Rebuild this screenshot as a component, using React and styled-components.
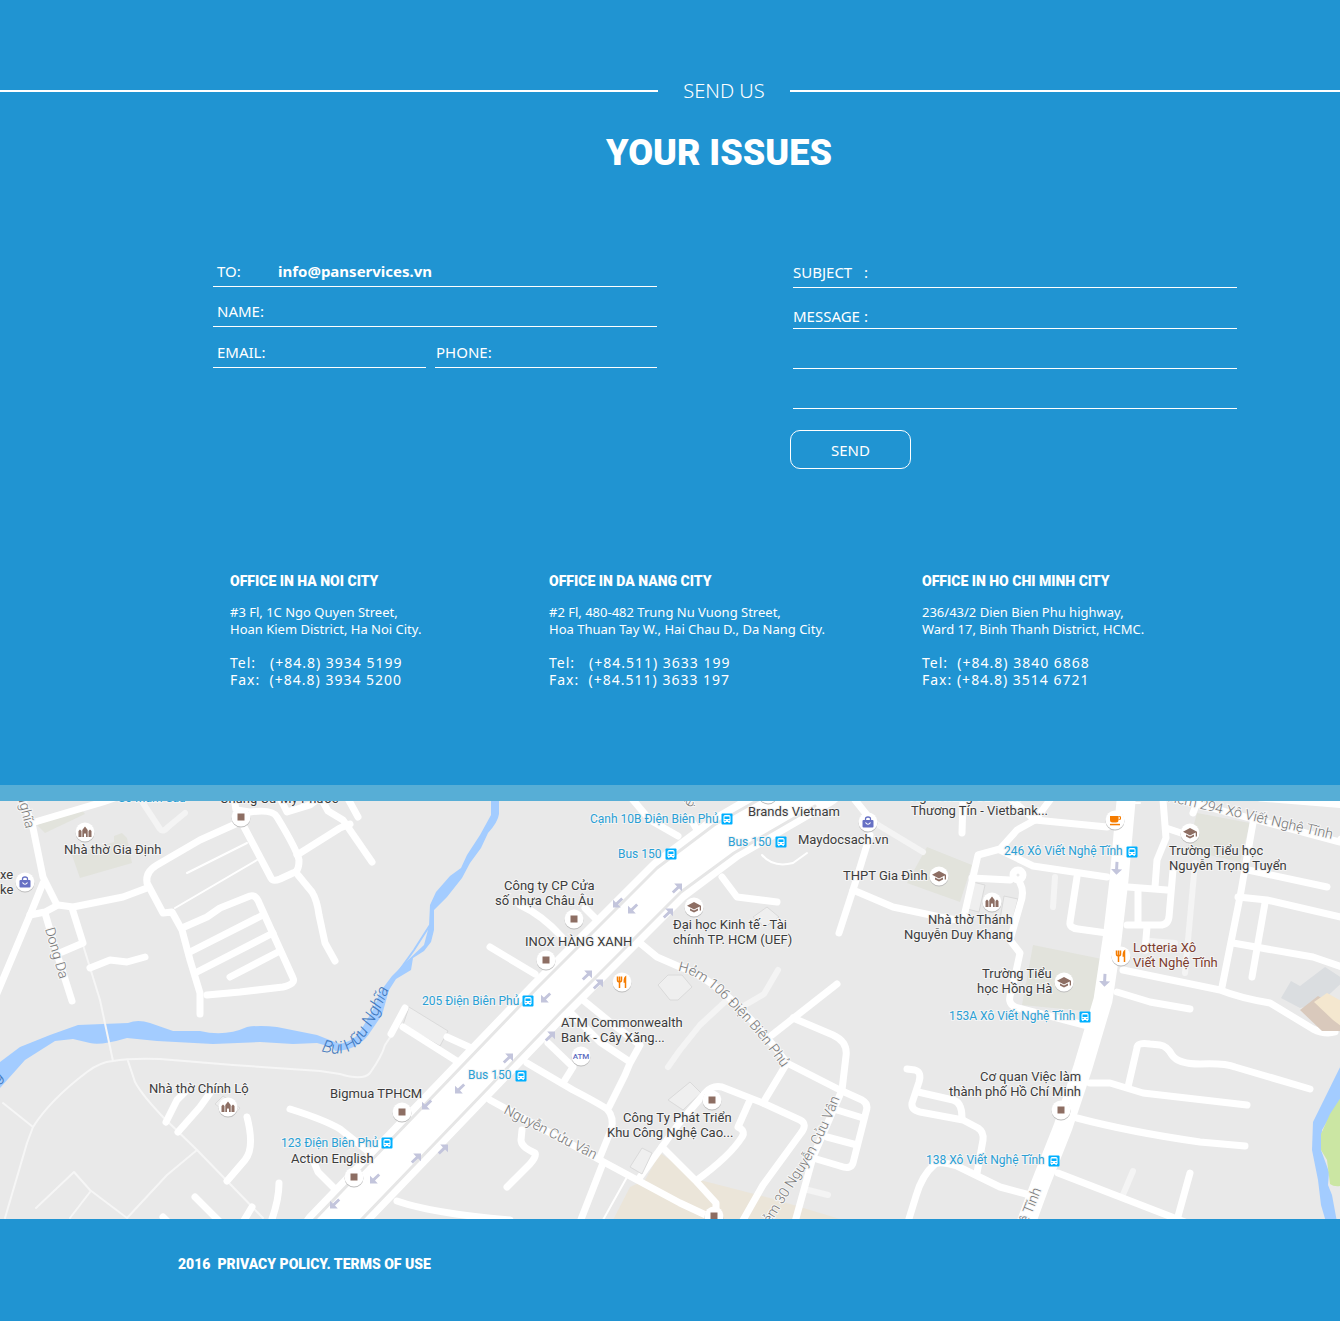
import React from 'react';
import styled, { createGlobalStyle } from 'styled-components';

const GlobalStyle = createGlobalStyle`
  *, *::before, *::after { box-sizing: border-box; }
  body { margin: 0; background: #2094d2; color: #fff; font-family: 'Noto Sans', 'Open Sans', sans-serif; }
`;

const Contact = styled.main`
  padding: 77px 0 97px;
`;

const Kicker = styled.p`
  display: grid;
  grid-template-columns: 658fr 132px 550fr;
  align-items: center;
  margin: 0;
  font-size: 20px;
  font-weight: 300;
  line-height: 28px;
  text-align: center;

  &::before, &::after { content: ''; height: 2px; background: #fff; }
`;

const Title = styled.h1`
  margin: 24px 0 0;
  padding-left: 98px;
  font: 900 36px/48px Roboto, sans-serif;
  text-align: center;
`;

const Form = styled.form`
  display: grid;
  grid-template-columns: minmax(0, 444fr) minmax(0, 447fr);
  gap: 133px;
  padding: 0 103px 0 213px;
  margin-top: 70px;
  font-size: 15px;
  line-height: 20px;
`;

const Fields = styled.div`
  display: grid;
  align-content: start;
  grid-template-rows: ${(p) => p.$rows};
  row-gap: ${(p) => p.$gap || 0}px;
  padding-left: ${(p) => p.$inset || 0}px;
`;

const Field = styled.div`
  display: flex;
  align-items: flex-end;
  padding: 0 0 5px ${(p) => p.$inset || 0}px;
  border-bottom: 1px solid #fff;
`;

const Label = styled.label`
  display: flex;
  flex: none;
  justify-content: space-between;
  width: ${(p) => (p.$width ? `${p.$width}px` : 'auto')};
`;

const Input = styled.input`
  flex: 1;
  min-width: 0;
  height: 20px;
  padding: 0;
  border: 0;
  outline: 0;
  background: none;
  color: #fff;
  font: inherit;
  font-weight: ${(p) => (p.readOnly ? 700 : 400)};
`;

const Pair = styled.div`
  display: grid;
  grid-template-columns: minmax(0, 213fr) minmax(0, 222fr);
  gap: 9px;
`;

const Message = styled.div`
  display: flex;
  padding-top: 17px;
  background: repeating-linear-gradient(to top, #fff 0 1px, transparent 1px 40px);
`;

const TextArea = styled.textarea`
  flex: 1;
  min-width: 0;
  padding: 0 0 0 8px;
  border: 0;
  outline: 0;
  resize: none;
  background: none;
  color: #fff;
  font: inherit;
  line-height: 40px;
`;

const SendButton = styled.button`
  width: 121px;
  height: 39px;
  margin-top: 21px;
  border: 1px solid #fff;
  border-radius: 10px;
  background: none;
  color: #fff;
  font: inherit;
`;

const Offices = styled.section`
  display: grid;
  grid-template-columns: 319fr 373fr 315fr;
  padding: 0 103px 0 230px;
  margin-top: 102px;
`;

const OfficeName = styled.h2`
  margin: 0 0 13px;
  font: 900 14px/20px Roboto, sans-serif;
`;

const Address = styled.address`
  font-size: 13px;
  font-style: normal;
  line-height: 17px;
`;

const Phones = styled.p`
  margin: 16px 0 0;
  font-size: 14px;
  line-height: 17px;
  letter-spacing: 1px;
  white-space: pre;
`;

const Band = styled.div`
  height: 16px;
  background: #57aed6;
`;

const MapCanvas = styled.svg`
  display: block;
  width: 100%;
  height: 418px;
  background: #e9e9e9;
  font-family: Roboto, sans-serif;
`;

const Roads = styled.g`
  fill: none;
  stroke: ${(p) => p.$tone || '#fff'};
  stroke-width: ${(p) => p.$width};
  stroke-linecap: round;
  stroke-linejoin: round;
`;

const PlaceName = styled.text`
  font-size: ${(p) => (p.$kind === 'bus' ? 12 : 13)}px;
  fill: ${(p) => ({ bus: '#2a9fd4', food: '#7d3c2e' }[p.$kind] || '#3c3c3c')};
  stroke: #f4f4f4;
  stroke-width: 2px;
  paint-order: stroke;
`;

const RoadName = styled.text`
  font-size: ${(p) => (p.$river ? 17 : 14)}px;
  font-weight: 300;
  font-style: ${(p) => (p.$river ? 'italic' : 'normal')};
  fill: ${(p) => (p.$river ? '#3f78bd' : '#777')};
  stroke: ${(p) => (p.$river ? 'none' : '#f6f6f6')};
  stroke-width: 2px;
  paint-order: stroke;
`;

const Footer = styled.footer`
  padding: 34px 178px 46px;
  font: 900 14px/22px Roboto, sans-serif;
  white-space: pre-wrap;
`;

const FooterLink = styled.a`
  color: inherit;
  text-decoration: none;
`;

const offices = [
  { name: 'OFFICE IN HA NOI CITY', address: ['#3 Fl, 1C Ngo Quyen Street,', 'Hoan Kiem District, Ha Noi City.'], phones: 'Tel:   (+84.8) 3934 5199\nFax:  (+84.8) 3934 5200' },
  { name: 'OFFICE IN DA NANG CITY', address: ['#2 Fl, 480-482 Trung Nu Vuong Street,', 'Hoa Thuan Tay W., Hai Chau D., Da Nang City.'], phones: 'Tel:   (+84.511) 3633 199\nFax:  (+84.511) 3633 197' },
  { name: 'OFFICE IN HO CHI MINH CITY', address: ['236/43/2 Dien Bien Phu highway,', 'Ward 17, Binh Thanh District, HCMC.'], phones: 'Tel:  (+84.8) 3840 6868\nFax: (+84.8) 3514 6721' },
];

const lanes = [
  'M5 1218L27 1143L33 1127Q50 1100 87 1072Q100 1062 113 1061Q130 1058 160 1059L233 1065L320 1071L340 1074Q363 1081 370 1073Q382 1056 385 1045L393 1033',
  'M83 945L100 1000L113 1061',
  'M128 1061L135 1082Q142 1095 163 1117L197 1150L263 1218',
  'M197 1150L167 1175L127 1218L90 1190L74 1172L36 1208',
  'M90 1192L70 1218', 'M3 1103L33 1127',
];

const faintStreets = [
  'M143 803L160 829Q163 833 168 827L185 813', 'M875 823L923 852', 'M1055 877L1053 907',
  'M1195 863L1185 973', 'M1150 941L1175 943', 'M778 970L764 994L740 1008', 'M727 1000L700 1025L680 1050L668 1067',
  'M808 1190L828 1195', 'M1133 1171L1122 1197',
];

const streets = [
  'M20 795L32 823L43 877L57 905', 'M35 822L103 802L120 796',
  'M30 915L45 912L58 905L73 907L123 897L147 888',
  'M240 822L200 840L157 865Q145 872 147 883L163 913L172 912L182 930L190 960L200 993L200 1014',
  'M43 883L30 915L-5 998', 'M45 913L58 957L72 1001', 'M72 908L83 943L62 952',
  'M90 968L110 960L127 962L145 957',
  'M182 928L207 917L220 908L250 896Q256 894 260 905L293 978Q296 984 283 987L240 992L207 995',
  'M190 952L263 915', 'M197 972L273 933', 'M230 977L280 951',
  'M243 825L271 878Q273 882 280 879L293 873Q299 872 299 860Q297 850 277 817Q273 809 250 812L236 810L234 798',
  'M297 855L340 828L350 824', 'M298 875L312 892Q317 900 319 915L325 943L335 961',
  'M280 798L287 812L310 805L322 796', 'M322 800L328 811L343 820L372 862', 'M346 795L358 817',
  'M166 1122L177 1100L187 1090', 'M178 1132L200 1107L210 1093', 'M247 1117Q255 1148 245 1160L227 1181',
  'M290 1109Q325 1120 340 1129L374 1156', 'M279 1183Q279 1200 271 1222', 'M195 1197L220 1222',
  'M252 1207L243 1222', 'M163 1217L168 1222', 'M313 1160L318 1172L338 1192',
  'M633 800L650 820L678 836', 'M690 818L702 838', 'M520 905Q542 915 562 937', 'M490 947L535 974', 'M585 908L602 925',
  'M640 943L657 957L680 967Q702 973 735 1003Q765 1033 787 1063L840 1090L862 1100Q869 1104 866 1112L853 1163Q851 1170 840 1166L813 1158',
  'M787 1063L763 1103', 'M772 1035L837 984', 'M793 1018L833 1035Q848 1042 846 1056L842 1090L813 1157L795 1222',
  'M837 1110L863 1118', 'M827 1137L857 1145',
  'M697 1180Q730 1156 742 1137Q746 1131 738 1127L750 1100',
  'M680 1122L705 1093Q712 1085 722 1087L763 1103L800 1120Q808 1124 801 1133L763 1185L742 1222',
  'M640 1177L680 1122', 'M527 1063L573 1090Q598 1103 607 1109Q615 1118 611 1130L600 1157',
  'M609 1107L625 1075L630 1063L640 1045L610 1022L583 1000', 'M630 1062L600 1042L570 1012',
  'M548 1043L573 1067L563 1083', 'M490 1100L600 1160L680 1203L712 1218',
  'M522 1130L521 1140Q521 1147 535 1153Q537 1156 530 1164L507 1187', 'M603 1163L580 1222',
  'M397 1201Q430 1213 510 1220', 'M405 1008L391 1034', 'M447 1037L480 1052', 'M403 1027L463 1065',
  'M662 1147L695 1180L716 1203L716 1217',
  'M722 877L737 897L777 902', 'M870 835L853 890L839 933', 'M853 890L893 907L940 917L963 921L978 855L1000 849L1017 830L1035 820L1107 827',
  'M855 800L867 815', 'M963 800L962 833', 'M1012 800L1035 820L1050 800', 'M972 878L1010 880',
  'M1000 850L1033 866L1107 877', 'M1020 883Q1025 892 1020 905L1010 940L1020 953L1012 990Q1006 1003 1015 1007L1088 1026',
  'M1077 877L1070 922Q1069 928 1078 929L1107 933',
  'M1163 800L1166 838L1157 860L1155 887', 'M1166 828L1187 835', 'M1193 813L1200 795', 'M1128 887L1167 890',
  'M1173 870L1169 917Q1168 925 1160 925L1127 925', 'M1138 890L1138 923', 'M1147 927L1145 950',
  'M1253 823L1240 897L1222 987', 'M1248 870L1327 887', 'M1238 897L1267 900L1345 918', 'M1265 903L1252 977',
  'M1233 943L1313 957L1345 968', 'M1123 970L1220 990Q1240 998 1270 1003L1313 1029Q1325 1035 1335 1032',
  'M1117 992L1150 1002L1190 1009', 'M1345 848L1341 839', 'M1260 798L1345 805', 'M1170 797L1340 842',
  'M1128 1087L1137 1048Q1137 1042 1150 1044L1160 1045Q1167 1046 1172 1055Q1178 1064 1200 1064Q1225 1063 1235 1067L1310 1089',
  'M1090 1083L1110 1083L1143 1093L1247 1105', 'M1077 1118Q1130 1132 1200 1142L1245 1146', 'M1058 1173L1190 1224',
  'M1190 1173L1177 1220',
  'M908 1222L916 1196Q922 1175 935 1164Q940 1161 957 1166L1000 1187L1030 1195',
  'M907 1069L915 1070Q922 1072 919 1082L912 1103Q911 1110 920 1112L963 1120L978 1128Q984 1132 983 1140L977 1173',
  'M918 1092L953 1100Q962 1102 962 1118',
];

const lightPaths = ['M187 873L247 843', 'M175 908L257 860', 'M762 855Q773 868 793 863L807 853', 'M627 1177L603 1220', 'M1134 803L1140 803'];

const oneWayUp = [[677, 888], [668, 913], [587, 975], [598, 984], [550, 1036], [508, 1058], [443, 1149], [416, 1158]];
const oneWayDown = [[618, 903], [633, 909], [546, 998], [460, 1089], [427, 1105], [375, 1179], [335, 1204]];
const oneWaySouth = [[1117, 868], [1105, 980]];

const places = [
  [64, 854, 'Nhà thờ Gia Định'], [220, 803, 'Chung Cư Mỹ Phước'], [0, 879, 'xe'], [0, 894, 'ke'],
  [504, 890, 'Công ty CP Cửa'], [495, 905, 'số nhựa Châu Âu'], [525, 946, 'INOX HÀNG XANH'],
  [748, 816, 'Brands Vietnam'], [798, 844, 'Maydocsach.vn'], [910, 801, 'Ngân hàng Sài Gòn'], [911, 815, 'Thương Tín - Vietbank...'],
  [843, 880, 'THPT Gia Đình'], [928, 924, 'Nhà thờ Thánh'], [904, 939, 'Nguyễn Duy Khang'],
  [673, 929, 'Đại học Kinh tế - Tài'], [673, 944, 'chính TP. HCM (UEF)'],
  [1169, 855, 'Trường Tiểu học'], [1169, 870, 'Nguyễn Trọng Tuyển'],
  [982, 978, 'Trường Tiểu'], [977, 993, 'học Hồng Hà'],
  [1133, 952, 'Lotteria Xô', 'food'], [1133, 967, 'Viết Nghệ Tĩnh', 'food'],
  [561, 1027, 'ATM Commonwealth'], [561, 1042, 'Bank - Cây Xăng...'],
  [149, 1093, 'Nhà thờ Chính Lộ'], [330, 1098, 'Bigmua TPHCM'], [291, 1163, 'Action English'],
  [623, 1122, 'Công Ty Phát Triển'], [607, 1137, 'Khu Công Nghệ Cao...'],
  [980, 1081, 'Cơ quan Việc làm'], [949, 1096, 'thành phố Hồ Chí Minh'],
  [118, 802, 'Sơ Mầm Sáu', 'bus'], [590, 823, 'Cạnh 10B Điện Biên Phủ', 'bus'], [618, 858, 'Bus 150', 'bus'],
  [728, 846, 'Bus 150', 'bus'], [1004, 855, '246 Xô Viết Nghệ Tĩnh', 'bus'], [422, 1005, '205 Điện Biên Phủ', 'bus'],
  [468, 1079, 'Bus 150', 'bus'], [281, 1147, '123 Điện Biên Phủ', 'bus'], [949, 1020, '153A Xô Viết Nghệ Tĩnh', 'bus'],
  [926, 1164, '138 Xô Viết Nghệ Tĩnh', 'bus'],
];

const stops = [[727, 819], [671, 854], [781, 842], [1132, 852], [528, 1001], [521, 1076], [387, 1143], [1085, 1017], [1054, 1161]];

const pins = [
  ['square', 241, 817], ['square', 574, 919], ['square', 546, 960], ['square', 402, 1112], ['square', 354, 1177],
  ['square', 712, 1100], ['square', 714, 1216], ['square', 1061, 1110], ['none', 768, 794],
  ['church', 85, 832], ['church', 228, 1107], ['church', 992, 902],
  ['cap', 694, 907], ['cap', 939, 876], ['cap', 1064, 982], ['cap', 1190, 833],
  ['bag', 25, 882], ['bag', 868, 822], ['fork', 622, 982], ['fork', 1121, 956], ['cup', 1115, 820], ['atm', 581, 1056],
];

const glyphs = {
  none: null,
  square: <rect x="-3.5" y="-3.5" width="7" height="7" fill="#8d6e63" />,
  church: <path fill="#8d6e63" d="M-6.5 5V-1L-5 -2.500L-3.500 -1V5ZM-2.700 5V-2L0 -5.500L2.700 -2V5H1V2Q0 .5 -1 2V5ZM3.500 5V-1L5 -2.500L6.500 -1V5Z" />,
  cap: <path fill="#8d6e63" d="M0 -5L7 -1.300V3.500H5.700V-.5L0 2.500L-7 -1.300ZM-4 1.500L0 3.600L4 1.500V3.500L0 5.500L-4 3.500Z" />,
  bag: <g><rect x="-5.500" y="-2" width="11" height="7.500" rx="1" fill="#6670c4" /><path d="M-2.500 -2V-3Q-2.500 -5 0 -5T2.500 -3V-2" fill="none" stroke="#6670c4" strokeWidth="1.300" /><path d="M-2.500 .5Q0 4 2.500 .5" fill="none" stroke="#fff" strokeWidth="1.200" /></g>,
  fork: <path fill="none" stroke="#f57c00" strokeWidth="1.500" d="M-4.500 -5.500V-2Q-4.500 0 -2.500 0T-.5 -2V-5.500M-2.500 -5.500V6M3.500 6V-5Q2.300 -4 2.300 0H3.500" />,
  cup: <g fill="#f57c00"><path d="M-5 -4H3.500V0Q3.500 2.500 1 2.500H-2.500Q-5 2.500 -5 0Z" /><rect x="-5" y="3.800" width="10" height="1.500" /><path d="M3.500 -3.300H5.500V-.7H3.500" fill="none" stroke="#f57c00" /></g>,
  atm: <text textAnchor="middle" y="3" fontSize="8" fontWeight="500" fill="#5c6bc0">ATM</text>,
};

const upArrow = 'M-5.200 3.400L0 -1.600L-2.800 -4.500H5V3.300L2.100 .5L-3.200 5.600Z';

function StreetMap() {
  return (
    <MapCanvas viewBox="0 801 1340 418" preserveAspectRatio="xMidYMid slice" role="img" aria-label="Map of the Ho Chi Minh City office">
      <g fill="#e2e3dc">
        <path d="M72 855L114 842L114 836L122 833L127 838L132 863L80 878Z" />
        <path d="M37 825L80 808L85 814L45 833Z" />
        <path d="M927 847L972 865L960 902L907 883Z" />
        <path d="M1033 945L1107 960L1095 1012L1022 1005Z" />
        <path d="M1197 813L1250 823L1240 862L1187 850Z" />
      </g>
      <path fill="#ebe5d9" d="M660 1153L700 1180L770 1198L850 1222H612L630 1187L645 1180Z" />
      <g fill="#efefef" stroke="#dadada">
        <path d="M409 1007L448 1031L440 1046L403 1025Z" />
        <path d="M668 1100L690 1082L701 1093L683 1110Z" />
        <path d="M753 917L767 907L779 917L765 927Z" />
        <path d="M658 985L668 975L682 975L692 987L678 1000H670Z" />
        <path d="M973 882L985 885L979 912L967 909Z" />
        <path d="M1004 896L1018 899L1012 922L1000 919Z" />
        <path d="M215 1104L223 1096L240 1108L232 1117Z" />
      </g>
      <path fill="#dadde0" d="M1281 998L1291 981L1300 986L1325 967L1345 980L1320 1003L1300 1008Z" />
      <g fill="#a3ccff">
        <path d="M0 1062L20 1047L50 1035L78 1025L128 1023Q138 1019 150 1023L173 1031L200 1031Q225 1037 247 1027Q260 1025 277 1027L317 1035L345 1046L342 1050L317 1043L293 1044L260 1042L213 1044L157 1041L127 1038Q100 1046 90 1043L73 1039L55 1041L25 1060L0 1088Z" />
        <path d="M491 800H499V814Q498 822 488 833L481 848L470 863L462 878L447 897L434 910V930L431 942L424 951L413 958L411 970L396 979L389 990L382 1015L371 1031Q360 1050 335 1051L331 1044Q352 1045 361 1030L374 1008L380 992L392 976L406 962L424 945L429 926L430 905L436 892L450 876L461 868L467 855L480 835L491 815Z" />
        <path d="M1345 1057L1313 1122L1312 1150L1318 1180L1321 1205L1326 1222H1337L1332 1195L1328 1185L1329 1172L1321 1150L1322 1130L1345 1091Z" />
      </g>
      <path d="M430 925L414 950L396 975" fill="none" stroke="#a3ccff" strokeWidth="2" />
      <path fill="#cbe6a3" d="M1345 1091L1330 1114L1321 1134V1150L1327 1160L1330 1184Q1335 1188 1345 1185Z" />
      <Roads $width={2} $tone="#f6f6f6">{lanes.map((d) => <path key={d} d={d} />)}</Roads>
      <Roads $width={6} $tone="#f4f4f4">{faintStreets.map((d) => <path key={d} d={d} />)}</Roads>
      <Roads $width={2}>{lightPaths.map((d) => <path key={d} d={d} />)}</Roads>
      <Roads $width={7}>
        {streets.map((d) => <path key={d} d={d} />)}
        <circle cx="1018" cy="875" r="5" />
      </Roads>
      <path fill="#efefef" stroke="#dadada" d="M642 1148L652 1153L642 1174L630 1167Z" />
      <path fill="#d9c9bc" d="M1300 1010L1318 996L1345 1012V1031H1322Z" />
      <path fill="#f4e7cf" d="M1314 1002L1327 993L1345 1003V1029L1333 1020Z" />
      <Roads $width={19}><path d="M1127 790L1119 880L1112 940L1103 1000L1083 1067L1063 1127L1040 1185L1025 1226" /></Roads>
      <Roads $width={51}><path d="M326 1232L549 1000L669 880L725 838L789 801L820 783" /></Roads>
      <Roads $width={3} $tone="#e6e6e6">
        <path d="M314 1220L537 988L657 868L714 825L790 782" />
        <path d="M338 1244L561 1012L681 892L734 853L815 806" />
      </Roads>
      <g fill="#c3c5dc">
        {oneWayUp.map(([x, y]) => <path key={`${x}-${y}`} transform={`translate(${x} ${y})`} d={upArrow} />)}
        {oneWayDown.map(([x, y]) => <path key={`${x}-${y}`} transform={`translate(${x} ${y}) rotate(180)`} d={upArrow} />)}
        {oneWaySouth.map(([x, y]) => <path key={`${x}-${y}`} transform={`translate(${x} ${y}) rotate(137)`} d={upArrow} />)}
      </g>
      <defs>
        <path id="river-name" d="M321 1051Q348 1060 364 1038T396 970" />
        <path id="alley-106" d="M678 971Q700 974 731 1007Q761 1036 787 1075" />
        <path id="alley-30" d="M765 1233L800 1176Q820 1150 843 1090" />
      </defs>
      <RoadName $river><textPath href="#river-name">Bùi Hữu Nghĩa</textPath></RoadName>
      <RoadName $river transform="translate(-2 1083) rotate(-50)">g</RoadName>
      <RoadName><textPath href="#alley-106">Hẻm 106 Điện Biên Phủ</textPath></RoadName>
      <RoadName><textPath href="#alley-30">Hẻm 30 Nguyễn Cửu Vân</textPath></RoadName>
      <RoadName transform="translate(503 1113) rotate(27)">Nguyễn Cửu Vân</RoadName>
      <RoadName transform="translate(45 929) rotate(74)">Dong Da</RoadName>
      <RoadName transform="translate(17 794) rotate(76)">Nghĩa</RoadName>
      <RoadName transform="translate(1167 801) rotate(13)">Hẻm 294 Xô Viết Nghệ Tĩnh</RoadName>
      <RoadName transform="translate(1018 1248) rotate(-68)">Nghệ Tĩnh</RoadName>
      <RoadName transform="translate(691 808) rotate(-60)">ệ</RoadName>
      {places.map(([x, y, name, kind]) => <PlaceName key={`${x}-${y}`} x={x} y={y} $kind={kind}>{name}</PlaceName>)}
      {stops.map(([x, y]) => (
        <g key={`${x}-${y}`} transform={`translate(${x} ${y})`}>
          <rect x="-5.500" y="-5.500" width="11" height="11" rx="1" fill="#00b0ff" />
          <path fill="#fff" d="M-3.500 -2.500Q-3.500 -4 -2 -4H2Q3.500 -4 3.500 -2.500V3H2.800V4H1.500V3H-1.500V4H-2.800V3H-3.500Z" />
          <path fill="#00b0ff" d="M-2.500 -2.500H2.500V0H-2.500ZM-2.500 1H-1.300V2H-2.500ZM1.300 1H2.500V2H1.300Z" />
        </g>
      ))}
      {pins.map(([kind, x, y]) => (
        <g key={`${x}-${y}`} transform={`translate(${x} ${y})`}>
          <circle cy="1" r="9.500" fill="#bdbdbd" />
          <circle r="9.500" fill="#fff" />
          {glyphs[kind]}
        </g>
      ))}
    </MapCanvas>
  );
}

export default function App() {
  return (
    <>
      <GlobalStyle />
      <Contact>
        <Kicker>SEND US</Kicker>
        <Title>YOUR ISSUES</Title>
        <Form onSubmit={(e) => e.preventDefault()}>
          <Fields $rows="40px 40px 41px">
            <Field $inset={4}>
              <Label htmlFor="to" $width={61}>TO:</Label>
              <Input id="to" type="email" readOnly value="info@panservices.vn" />
            </Field>
            <Field $inset={4}>
              <Label htmlFor="name">NAME:</Label>
              <Input id="name" type="text" />
            </Field>
            <Pair>
              <Field $inset={4}>
                <Label htmlFor="email">EMAIL:</Label>
                <Input id="email" type="email" />
              </Field>
              <Field $inset={1}>
                <Label htmlFor="phone">PHONE:</Label>
                <Input id="phone" type="tel" />
              </Field>
            </Pair>
          </Fields>
          <div>
            <Fields $rows="41px 120px" $gap={1} $inset={3}>
              <Field>
                <Label htmlFor="subject" $width={75}><span>SUBJECT</span><span>:</span></Label>
                <Input id="subject" type="text" />
              </Field>
              <Message>
                <Label htmlFor="message" $width={75}><span>MESSAGE</span><span>:</span></Label>
                <TextArea id="message" />
              </Message>
            </Fields>
            <SendButton type="submit">SEND</SendButton>
          </div>
        </Form>
        <Offices>
          {offices.map((o) => (
            <div key={o.name}>
              <OfficeName>{o.name}</OfficeName>
              <Address>{o.address[0]}<br />{o.address[1]}</Address>
              <Phones>{o.phones}</Phones>
            </div>
          ))}
        </Offices>
      </Contact>
      <Band />
      <StreetMap />
      <Footer>2016  <FooterLink href="#privacy">PRIVACY POLICY.</FooterLink> <FooterLink href="#terms">TERMS OF USE</FooterLink></Footer>
    </>
  );
}
